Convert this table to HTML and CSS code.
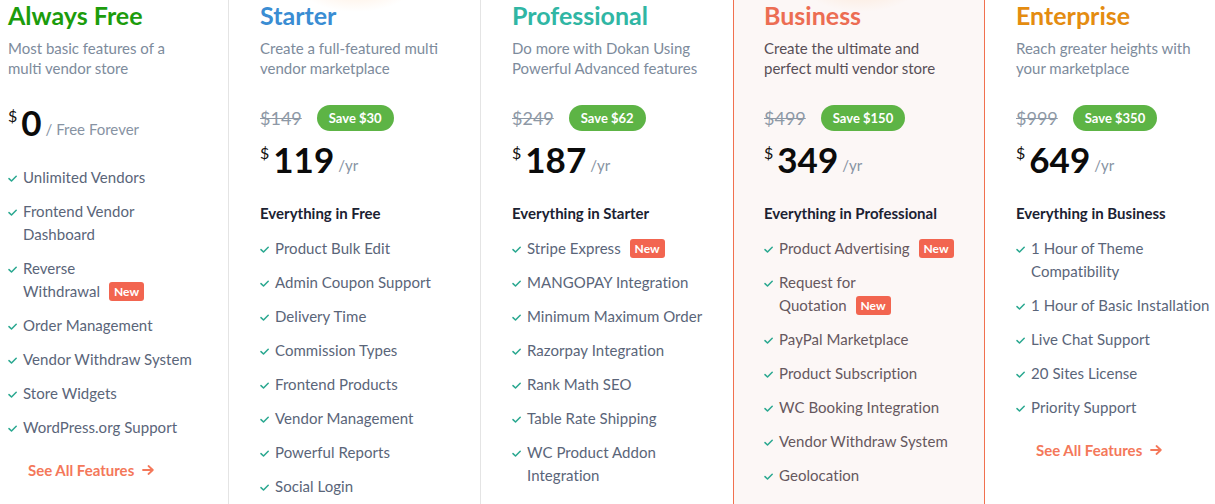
FILE: index.html
```html
<!DOCTYPE html>
<html lang="en">
<head>
<meta charset="utf-8">
<title>Pricing</title>
<link rel="stylesheet" href="styles.css">
</head>
<body>
<svg width="0" height="0" class="defs">
  <defs>
    <symbol id="chk" viewBox="0 0 9 7"><path d="M1 3.6 L3.5 6 L8.2 1.2" fill="none" stroke="#2aa890" stroke-width="1.5" stroke-linecap="round" stroke-linejoin="round"/></symbol>
    <symbol id="arr" viewBox="0 0 12 10"><path d="M1 5 H10.5 M6.5 1 L10.8 5 L6.5 9" fill="none" stroke="#f4785a" stroke-width="1.8" stroke-linecap="round" stroke-linejoin="round"/></symbol>
  </defs>
</svg>
<div class="plans">
  <section class="plan plan-free">
    <h2 class="title t-green">Always Free</h2>
    <p class="desc">Most basic features of a multi vendor store</p>
    <div class="price price-free">
      <span class="cur">$</span><span class="amount">0</span><span class="per per-free">/ Free Forever</span>
    </div>
    <ul class="features features-free">
      <li><svg class="ck"><use href="#chk"/></svg><span>Unlimited Vendors</span></li>
      <li><svg class="ck"><use href="#chk"/></svg><span>Frontend Vendor Dashboard</span></li>
      <li><svg class="ck"><use href="#chk"/></svg><span>Reverse <span class="nw">Withdrawal <em class="new">New</em></span></span></li>
      <li><svg class="ck"><use href="#chk"/></svg><span>Order Management</span></li>
      <li><svg class="ck"><use href="#chk"/></svg><span>Vendor Withdraw System</span></li>
      <li><svg class="ck"><use href="#chk"/></svg><span>Store Widgets</span></li>
      <li><svg class="ck"><use href="#chk"/></svg><span>WordPress.org Support</span></li>
    </ul>
    <a class="see-all" href="#">See All Features <svg class="arrow"><use href="#arr"/></svg></a>
  </section>

  <section class="plan glow">
    <h2 class="title t-blue">Starter</h2>
    <p class="desc">Create a full-featured multi vendor marketplace</p>
    <div class="old-row"><s class="old">$149</s><span class="save">Save $30</span></div>
    <div class="price">
      <span class="cur">$</span><span class="amount">119</span><span class="per">/yr</span>
    </div>
    <h4 class="incl">Everything in Free</h4>
    <ul class="features">
      <li><svg class="ck"><use href="#chk"/></svg><span>Product Bulk Edit</span></li>
      <li><svg class="ck"><use href="#chk"/></svg><span>Admin Coupon Support</span></li>
      <li><svg class="ck"><use href="#chk"/></svg><span>Delivery Time</span></li>
      <li><svg class="ck"><use href="#chk"/></svg><span>Commission Types</span></li>
      <li><svg class="ck"><use href="#chk"/></svg><span>Frontend Products</span></li>
      <li><svg class="ck"><use href="#chk"/></svg><span>Vendor Management</span></li>
      <li><svg class="ck"><use href="#chk"/></svg><span>Powerful Reports</span></li>
      <li><svg class="ck"><use href="#chk"/></svg><span>Social Login</span></li>
    </ul>
    <a class="see-all" href="#">See All Features <svg class="arrow"><use href="#arr"/></svg></a>
  </section>

  <section class="plan plan-pro">
    <h2 class="title t-teal">Professional</h2>
    <p class="desc">Do more with Dokan Using Powerful Advanced features</p>
    <div class="old-row"><s class="old">$249</s><span class="save">Save $62</span></div>
    <div class="price">
      <span class="cur">$</span><span class="amount">187</span><span class="per">/yr</span>
    </div>
    <h4 class="incl">Everything in Starter</h4>
    <ul class="features">
      <li><svg class="ck"><use href="#chk"/></svg><span>Stripe Express <em class="new">New</em></span></li>
      <li><svg class="ck"><use href="#chk"/></svg><span>MANGOPAY Integration</span></li>
      <li><svg class="ck"><use href="#chk"/></svg><span>Minimum Maximum Order</span></li>
      <li><svg class="ck"><use href="#chk"/></svg><span>Razorpay Integration</span></li>
      <li><svg class="ck"><use href="#chk"/></svg><span>Rank Math SEO</span></li>
      <li><svg class="ck"><use href="#chk"/></svg><span>Table Rate Shipping</span></li>
      <li><svg class="ck"><use href="#chk"/></svg><span>WC Product Addon Integration</span></li>
    </ul>
    <a class="see-all" href="#">See All Features <svg class="arrow"><use href="#arr"/></svg></a>
  </section>

  <section class="plan plan-biz glow">
    <h2 class="title t-salmon">Business</h2>
    <p class="desc">Create the ultimate and perfect multi vendor store</p>
    <div class="old-row"><s class="old">$499</s><span class="save">Save $150</span></div>
    <div class="price">
      <span class="cur">$</span><span class="amount">349</span><span class="per">/yr</span>
    </div>
    <h4 class="incl">Everything in Professional</h4>
    <ul class="features">
      <li><svg class="ck"><use href="#chk"/></svg><span class="nw">Product Advertising <em class="new">New</em></span></li>
      <li><svg class="ck"><use href="#chk"/></svg><span>Request for <span class="nw">Quotation <em class="new">New</em></span></span></li>
      <li><svg class="ck"><use href="#chk"/></svg><span>PayPal Marketplace</span></li>
      <li><svg class="ck"><use href="#chk"/></svg><span>Product Subscription</span></li>
      <li><svg class="ck"><use href="#chk"/></svg><span>WC Booking Integration</span></li>
      <li><svg class="ck"><use href="#chk"/></svg><span>Vendor Withdraw System</span></li>
      <li><svg class="ck"><use href="#chk"/></svg><span>Geolocation</span></li>
    </ul>
    <a class="see-all" href="#">See All Features <svg class="arrow"><use href="#arr"/></svg></a>
  </section>

  <section class="plan plan-ent">
    <h2 class="title t-orange">Enterprise</h2>
    <p class="desc">Reach greater heights with your marketplace</p>
    <div class="old-row"><s class="old">$999</s><span class="save">Save $350</span></div>
    <div class="price">
      <span class="cur">$</span><span class="amount">649</span><span class="per">/yr</span>
    </div>
    <h4 class="incl">Everything in Business</h4>
    <ul class="features">
      <li><svg class="ck"><use href="#chk"/></svg><span>1 Hour of Theme Compatibility</span></li>
      <li><svg class="ck"><use href="#chk"/></svg><span>1 Hour of Basic Installation</span></li>
      <li><svg class="ck"><use href="#chk"/></svg><span>Live Chat Support</span></li>
      <li><svg class="ck"><use href="#chk"/></svg><span>20 Sites License</span></li>
      <li><svg class="ck"><use href="#chk"/></svg><span>Priority Support</span></li>
    </ul>
    <a class="see-all" href="#">See All Features <svg class="arrow"><use href="#arr"/></svg></a>
  </section>
</div>
</body>
</html>
```
FILE: styles.css
```css
html, body {
  margin: 0;
  padding: 0;
  background: #ffffff;
  overflow: hidden;
}
body {
  font-family: Lato, "Open Sans", "Liberation Sans", sans-serif;
  color: #5a6579;
  width: 1215px;
  height: 504px;
}
.defs { position: absolute; width: 0; height: 0; }

.plans {
  display: grid;
  grid-template-columns: repeat(5, 252px);
  margin-left: -23px;
  align-items: stretch;
}
.plan {
  position: relative;
  box-sizing: border-box;
  padding: 0 30px 40px 31px;
  border-right: 1px solid #e4e4e4;
}
.plan-pro { border-right: none; }
.plan-biz {
  background: #fcf7f6;
  border-left: 1px solid #f1704f;
  border-right: 1px solid #f1704f;
  padding-left: 30px;
  padding-right: 26px;
}
.plan-ent { border-right: none; padding-right: 20px; }

.glow::before {
  content: "";
  position: absolute;
  top: -46px;
  left: 68px;
  width: 118px;
  height: 58px;
  border-radius: 50%;
  background: radial-gradient(closest-side, rgba(255, 205, 160, 0.4), rgba(255, 205, 160, 0));
  pointer-events: none;
}

.title {
  margin: 0;
  font-size: 25px;
  line-height: 31px;
  font-weight: 700;
  position: relative;
}
.t-green { color: #1c9c0c; }
.t-blue { color: #3a8dd3; }
.t-teal { color: #30b6a4; }
.t-salmon { color: #ec6d53; }
.t-orange { color: #e48c10; }

.desc {
  margin: 7px 0 0;
  font-size: 15px;
  line-height: 20px;
  color: #7d8b9c;
}
.plan-biz .desc { color: #584f56; }

.old-row {
  margin-top: 27px;
  display: flex;
  align-items: center;
  height: 26px;
}
.old {
  font-size: 18px;
  color: #8e99a6;
  text-decoration: line-through;
  margin-right: 15px;
}
.save {
  display: inline-flex;
  align-items: center;
  height: 26px;
  padding: 0 12px;
  border-radius: 13px;
  background: #5db445;
  color: #fff;
  font-size: 13px;
  font-weight: 700;
}

.price {
  display: flex;
  align-items: flex-end;
  margin-top: 8px;
  height: 40px;
}
.price-free { margin-top: 24px; }
.cur {
  align-self: flex-start;
  font-size: 16px;
  line-height: 16px;
  margin-top: 6px;
  margin-right: 4px;
  color: #111;
}
.amount {
  font-size: 35px;
  line-height: 40px;
  font-weight: 700;
  color: #0b0b0b;
}
.per {
  font-size: 15px;
  line-height: 20px;
  color: #8793a3;
  margin-left: 4px;
  margin-bottom: 4px;
}
.per-free { margin-bottom: 3px; margin-left: 4px; }

.incl {
  margin: 24px 0 0;
  font-size: 15px;
  line-height: 20px;
  font-weight: 700;
  color: #1b2232;
}

.features {
  list-style: none;
  margin: 14px 0 0;
  padding: 0;
}
.features-free { margin-top: 24px; }
.features li {
  display: flex;
  align-items: flex-start;
  font-size: 15px;
  line-height: 23px;
  letter-spacing: 0.05px;
}
.features li + li { margin-top: 11px; }
.plan-biz .features li { color: #66585e; }
.nw { white-space: nowrap; }
.ck {
  flex: none;
  width: 9px;
  height: 7px;
  margin-top: 9px;
  margin-right: 6px;
}
.new {
  display: inline-block;
  font-style: normal;
  letter-spacing: 0;
  font-size: 12px;
  font-weight: 700;
  line-height: 19px;
  height: 19px;
  padding: 0 5px;
  margin-left: 5px;
  border-radius: 3px;
  background: #f26550;
  color: #fff;
  vertical-align: 1px;
}

.see-all {
  display: flex;
  align-items: center;
  gap: 8px;
  margin: 21px 0 0 20px;
  font-size: 15px;
  line-height: 20px;
  font-weight: 700;
  color: #f4785a;
  text-decoration: none;
}
.arrow {
  width: 12px;
  height: 10px;
}
```
